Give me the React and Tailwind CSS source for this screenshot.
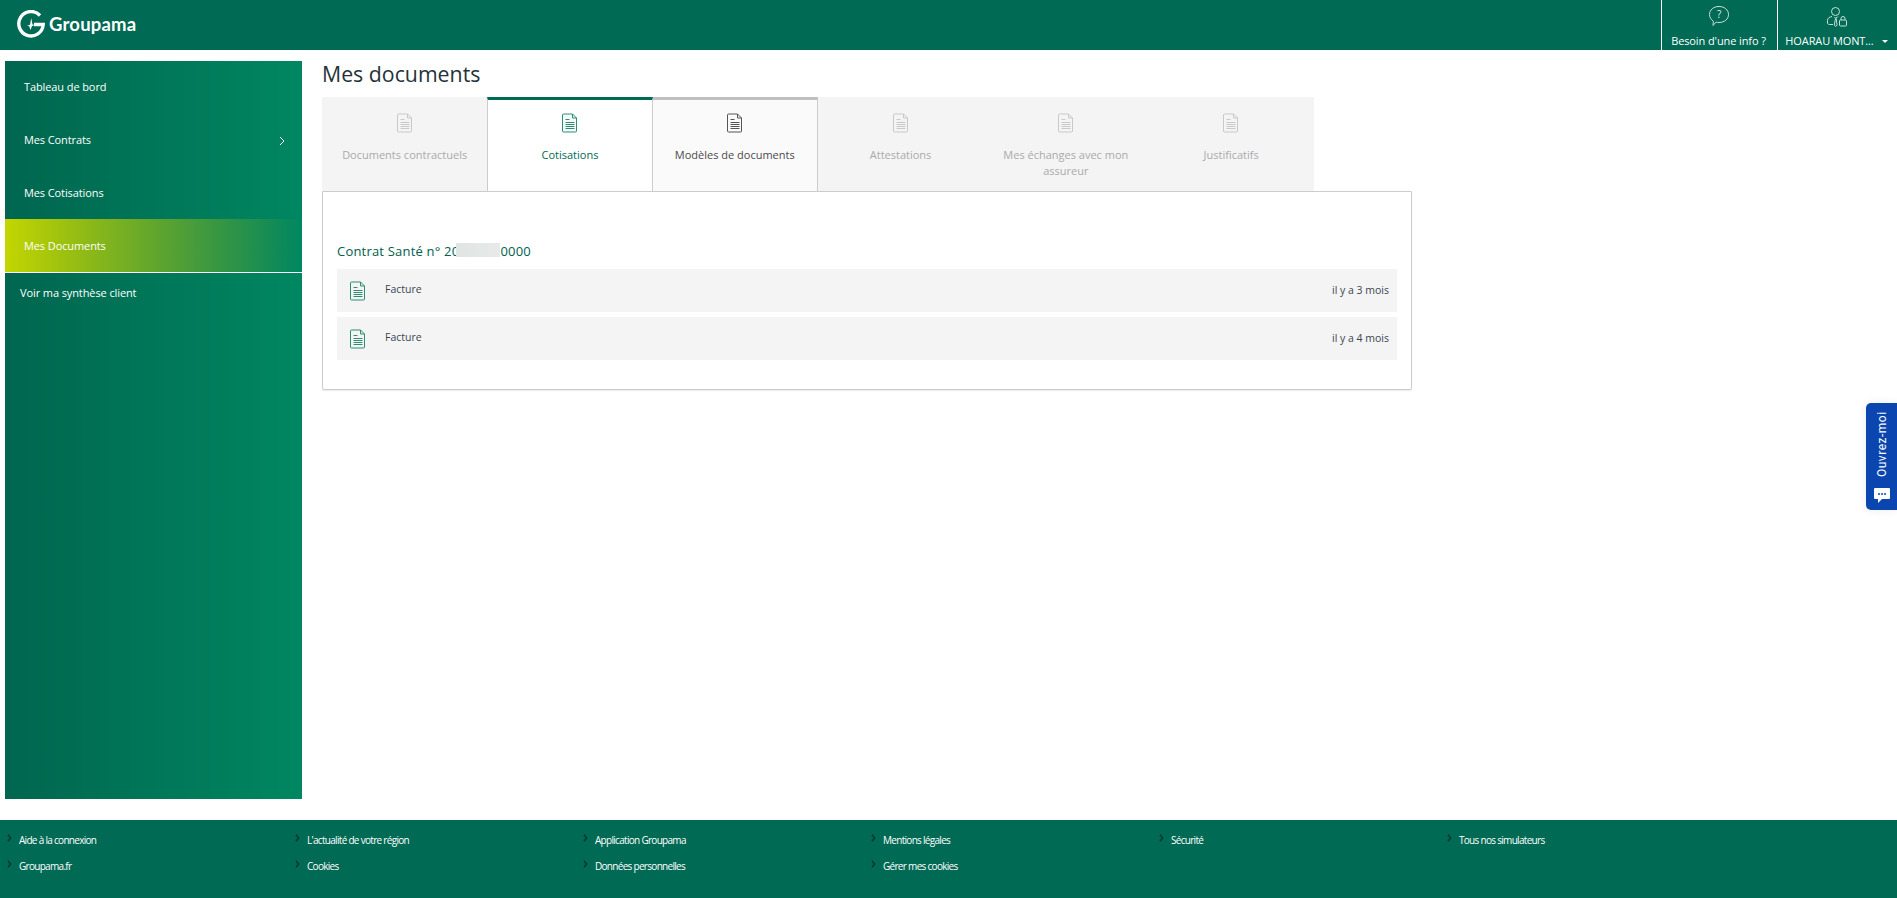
import React from "react";

const tabs = [
  { label: "Documents contractuels", state: "off" },
  { label: "Cotisations", state: "active" },
  { label: "Modèles de documents", state: "on" },
  { label: "Attestations", state: "off" },
  { label: "Mes échanges avec mon assureur", state: "off" },
  { label: "Justificatifs", state: "off" },
];

const footerLinks = [
  ["Aide à la connexion", "Groupama.fr"],
  ["L'actualité de votre région", "Cookies"],
  ["Application Groupama", "Données personnelles"],
  ["Mentions légales", "Gérer mes cookies"],
  ["Sécurité"],
  ["Tous nos simulateurs"],
];

function DocIcon({ stroke = "#006a54", lines = "#006a54", fill = "none" }) {
  return (
    <svg width="16" height="20" viewBox="0 0 16 20" fill="none">
      <path d="M1.500 1h9l4 4v13a1 1 0 0 1-1 1h-12a1 1 0 0 1-1-1V2a1 1 0 0 1 1-1z" fill={fill} stroke={stroke} strokeWidth="1" />
      <path d="M10.500 1v4h4" stroke={stroke} strokeWidth="1" />
      <path d="M3.500 6.500h4M3.500 9.500h9M3.500 11.500h9M3.500 13.500h9M3.500 15.500h9" stroke={lines} strokeWidth="1" />
    </svg>
  );
}

function Logo() {
  return (
    <svg className="mb-[3px]" width="28" height="28" viewBox="0 0 28 28" fill="none">
      <path d="M23 5.500A12.200 12.200 0 1 0 26.200 14.500H17" stroke="white" strokeWidth="3.400" />
      <path d="M6.500 15.500c3 .3 5.500 0 6.600-1l1.100-6.500 1.300 6.500 2.500.5-3 1-1.500 4-1.300-3.800c-1.800-.6-3.700-.6-4.700-.7z" fill="white" />
    </svg>
  );
}

function Header() {
  return (
    <header className="h-[50px] shrink-0 bg-[#006a54] flex justify-between">
      <div className="flex items-center pl-[17px] gap-[4px]">
        <Logo />
        <span className="font-['Lato',sans-serif] font-bold text-[18.500px] tracking-[0.2px] text-white">Groupama</span>
      </div>
      <div className="flex text-white text-[11px] tracking-[-0.1px]">
        <div className="w-[116px] border-l border-white flex flex-col items-center">
          <svg className="mt-[5px] -ml-[2px]" width="22" height="22" viewBox="0 0 22 22" fill="none" stroke="#c5e0d8" strokeWidth="1">
            <path d="M11 1.500c5.500 0 9.500 3.500 9.500 8s-4 8-9.500 8c-1 0-2-.1-2.900-.4L5 20.500l.4-4.300C3 14.700 1.500 12.300 1.500 9.500c0-4.500 4-8 9.500-8z" />
            <text x="11" y="13" textAnchor="middle" fontSize="10" fill="#dcefe9" stroke="none" fontFamily="Open Sans">?</text>
          </svg>
          <span className="mt-[7px] leading-[14px] -ml-[2px]">Besoin d'une info ?</span>
        </div>
        <div className="w-[120px] border-l border-white flex flex-col items-center">
          <svg className="mt-[6px] -ml-[2px]" width="22" height="22" viewBox="0 0 22 22" fill="none" stroke="#c5e0d8" strokeWidth="1">
            <circle cx="9.500" cy="5.500" r="4" />
            <path d="M6 10.500c-2.500.5-4.500 1.500-4.500 4v2.500c0 1 1 1.500 2 1.500H7M12 10.500l-.8 1" />
            <path d="M8.500 11l1 1.500-1.200 6.500 1.400 1.500 1.400-1.500L10.100 12.500l.4-1.500" />
            <rect x="13.500" y="14" width="7" height="6" rx="1" />
            <path d="M15 14v-1.500a2 2 0 0 1 4 0V14" />
          </svg>
          <div className="mt-[6px] leading-[14px] flex items-center -ml-[2px]">
            <span>HOARAU MONT...</span>
            <span className="ml-[8px] w-0 h-0 border-x-[3px] border-x-transparent border-t-[3px] border-t-white" />
          </div>
        </div>
      </div>
    </header>
  );
}

function Sidebar() {
  return (
    <aside className="ml-[5px] mt-[11px] w-[297px] h-[738px] shrink-0 bg-gradient-to-r from-[#00664f] to-[#008761] text-white text-[11px] tracking-[-0.1px]">
      <div className="h-[52px] pl-[19px] flex items-center">Tableau de bord</div>
      <div className="h-[53px] pl-[19px] pr-[17px] pt-[2px] flex items-center justify-between">
        <span>Mes Contrats</span>
        <svg width="6" height="10" viewBox="0 0 6 10" fill="none" stroke="white" strokeWidth="1">
          <path d="M1 1l4 4-4 4" />
        </svg>
      </div>
      <div className="h-[53px] pl-[19px] pt-[2px] flex items-center">Mes Cotisations</div>
      <div className="h-[53px] pl-[19px] pt-[2px] flex items-center bg-gradient-to-r from-[#c4d600] to-[#c4d600]/0">Mes Documents</div>
      <div className="border-t border-white pt-[12px] pl-[15px] leading-[16px]">Voir ma synthèse client</div>
    </aside>
  );
}

function Tab({ label, state }) {
  const skin = {
    off: "bg-[#f4f4f4] text-[#aaaaaa] border-t-[3px] border-t-[#f4f4f4]",
    active: "bg-white text-[#006a54] border-t-[3px] border-t-[#006a54] border-x border-x-[#cccccc]",
    on: "bg-[#fafafa] text-[#4a4a4a] border-t-[3px] border-t-[#c0c0c0] border-r border-r-[#cccccc]",
  }[state];
  const icon = {
    off: <DocIcon stroke="#c9c9c9" lines="#c9c9c9" />,
    active: <DocIcon stroke="#2f8d74" lines="#2f8d74" fill="#f4faf8" />,
    on: <DocIcon stroke="#555555" lines="#555555" />,
  }[state];
  return (
    <div className={"w-[165.300px] h-[94px] flex flex-col items-center px-[10px] text-center " + skin}>
      <div className="mt-[13px] h-[20px]">{icon}</div>
      <div className="mt-[14px] text-[11px] leading-[16px] font-medium">{label}</div>
    </div>
  );
}

function FactureRow({ when }) {
  return (
    <div className="h-[43px] bg-[#f4f4f4] flex items-center justify-between pl-[13px] pr-[8px] text-[10.500px] text-[#3b4650]">
      <div className="flex items-center">
        <DocIcon stroke="#2f8d74" lines="#2f8d74" />
        <span className="ml-[19px] -mt-[1px]">Facture</span>
      </div>
      <span className="mt-[1px]">{when}</span>
    </div>
  );
}

function Main() {
  return (
    <main className="ml-[20px] w-[1090px]">
      <h1 className="mt-[9px] h-[38px] text-[21.300px] leading-[30px] text-[#26323a]">Mes documents</h1>
      <div className="flex">
        {tabs.map((t) => (
          <Tab key={t.label} label={t.label} state={t.state} />
        ))}
      </div>
      <section className="h-[199px] border border-[#cccccc] rounded-b-[2px] px-[14px] pt-[51px] shadow-[0_1px_1px_rgba(0,0,0,0.08)]">
        <h2 className="h-[26px] text-[13px] font-medium tracking-[0.2px] leading-[18px] text-[#00604c] flex items-start -mt-[1px]">
          <span>Contrat Santé n° 20</span>
          <span className="relative -ml-[3px] w-[44px] h-[14px] mt-[1px] bg-gradient-to-r from-[#dfe5e3] to-[#e8eaea]" />
          <span>0000</span>
        </h2>
        <div className="flex flex-col gap-[5px] mt-[1px]">
          <FactureRow when="il y a 3 mois" />
          <FactureRow when="il y a 4 mois" />
        </div>
      </section>
    </main>
  );
}

function Footer() {
  return (
    <footer className="h-[78px] shrink-0 bg-[#006a54] flex pl-[7px] pt-[7px] text-white text-[10px] tracking-[-0.7px]">
      {footerLinks.map((col) => (
        <div key={col[0]} className="w-[288px] flex flex-col">
          {col.map((link) => (
            <div key={link} className="h-[26px] flex items-center">
              <svg className="-mt-[4px]" width="5" height="8" viewBox="0 0 5 8" fill="none" stroke="#003d2e" strokeWidth="1.800">
                <path d="M1 .8l2.500 3.200L1 7.200" />
              </svg>
              <span className="ml-[7px]">{link}</span>
            </div>
          ))}
        </div>
      ))}
    </footer>
  );
}

function ChatTab() {
  return (
    <div className="absolute right-0 top-[403px] w-[31px] h-[107px] bg-[#0a45b0] rounded-l-[5px] flex flex-col items-center text-white shadow-[0_0_10px_rgba(0,0,0,0.08)]">
      <span className="mt-[10px] h-[64px] text-center whitespace-nowrap [writing-mode:vertical-rl] rotate-180 font-['Roboto',sans-serif] text-[12px] tracking-[0.5px]">Ouvrez-moi</span>
      <svg className="mt-[11px]" width="16" height="16" viewBox="0 0 16 16">
        <path d="M1 0h14a1 1 0 0 1 1 1v9a1 1 0 0 1-1 1H8l-4 4v-4H1a1 1 0 0 1-1-1V1a1 1 0 0 1 1-1z" fill="white" />
        <circle cx="5" cy="6" r="1" fill="#0a45b0" />
        <circle cx="8" cy="6" r="1" fill="#0a45b0" />
        <circle cx="11" cy="6" r="1" fill="#0a45b0" />
      </svg>
    </div>
  );
}

export default function App() {
  return (
    <div className="relative h-[898px] flex flex-col bg-white font-['Open_Sans',sans-serif] overflow-hidden">
      <Header />
      <div className="flex flex-1">
        <Sidebar />
        <Main />
      </div>
      <Footer />
      <ChatTab />
    </div>
  );
}
